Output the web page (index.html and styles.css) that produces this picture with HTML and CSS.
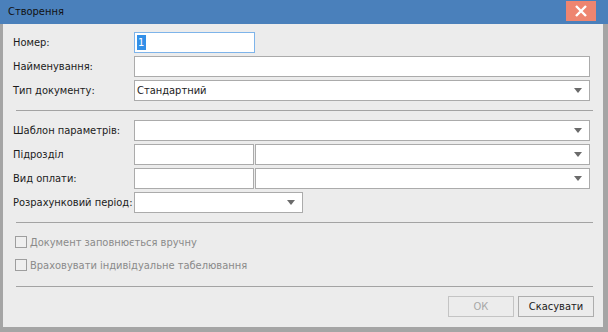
FILE: index.html
```html
<!DOCTYPE html>
<html lang="uk">
<head>
    <meta charset="UTF-8">
    <title>Створення</title>
    <link rel="stylesheet" href="styles.css">
</head>
<body>
    <div class="window">
        <div class="titlebar">
            <span class="title">Створення</span>
            <button class="close-btn">
                <svg width="12" height="12" viewBox="0 0 12 12"><path d="M1 1 L11 11 M11 1 L1 11" stroke="#fff" stroke-width="2.4"/></svg>
            </button>
        </div>
        <div class="content">
            <div class="section top">
                <div class="row">
                    <label>Номер:</label>
                    <div class="field short focused"><span class="sel">1</span></div>
                </div>
                <div class="row">
                    <label>Найменування:</label>
                    <div class="field"></div>
                </div>
                <div class="row">
                    <label>Тип документу:</label>
                    <div class="field combo"><span class="value">Стандартний</span><span class="arrow"></span></div>
                </div>
            </div>
            <div class="sep"></div>
            <div class="section">
                <div class="row">
                    <label>Шаблон параметрів:</label>
                    <div class="field combo"><span class="arrow"></span></div>
                </div>
                <div class="row">
                    <label>Підрозділ</label>
                    <div class="split">
                        <div class="field"></div>
                        <div class="field combo"><span class="arrow"></span></div>
                    </div>
                </div>
                <div class="row">
                    <label>Вид оплати:</label>
                    <div class="split">
                        <div class="field"></div>
                        <div class="field combo"><span class="arrow"></span></div>
                    </div>
                </div>
                <div class="row">
                    <label>Розрахунковий період:</label>
                    <div class="field combo period"><span class="arrow"></span></div>
                </div>
            </div>
            <div class="sep"></div>
            <div class="checks">
                <div class="check"><span class="box"></span>Документ заповнюється вручну</div>
                <div class="check"><span class="box"></span>Враховувати індивідуальне табелювання</div>
            </div>
            <div class="sep"></div>
            <div class="buttons">
                <button class="btn disabled">ОК</button>
                <button class="btn cancel">Скасувати</button>
            </div>
        </div>
    </div>
</body>
</html>
```

FILE: styles.css
```css
body {
    margin: 0;
    padding: 0;
    font-family: 'DejaVu Sans Condensed', 'DejaVu Sans', sans-serif;
    font-size: 11px;
    color: #1b1b1b;
    background: #ececec;
}

.window {
    width: 608px;
    height: 332px;
    box-sizing: border-box;
    background: #ececec;
    border-left: 3px solid #a5a5a5;
    border-right: 5px solid #a5a5a5;
    border-bottom: 5px solid #a5a5a5;
    display: flex;
    flex-direction: column;
}

.titlebar {
    height: 24px;
    flex: none;
    background: #4a80bb;
    margin: 0 -5px 0 -3px;
    padding: 0 0 0 8px;
    display: flex;
    align-items: flex-start;
}

.title {
    line-height: 24px;
    color: #111;
    flex: 1;
}

.close-btn {
    width: 30px;
    height: 20px;
    margin: 1px 12px 0 0;
    padding: 0;
    border: none;
    background: #ee8570;
    display: flex;
    align-items: center;
    justify-content: center;
}

.content {
    padding: 8px 13px 0 10px;
}

.section {
    display: flex;
    flex-direction: column;
    gap: 3px;
}

.row {
    display: grid;
    grid-template-columns: 121px 1fr;
    align-items: center;
    height: 21px;
    white-space: nowrap;
}

.field {
    height: 21px;
    box-sizing: border-box;
    border: 1px solid #ababab;
    background: #fff;
    display: flex;
    align-items: center;
    padding: 0 2px;
}

.field.short {
    width: 121px;
}

.field.focused {
    border-color: #7eb4ea;
}

.sel {
    background: #3390e8;
    color: #fff;
    line-height: 15px;
    padding: 0 2px 0 1px;
}

.combo {
    justify-content: space-between;
    padding-right: 7px;
}

.combo .value {
    color: #1b1b1b;
}

.arrow {
    margin-left: auto;
    width: 0;
    height: 0;
    border-left: 4px solid transparent;
    border-right: 4px solid transparent;
    border-top: 5px solid #6b6b6b;
}

.split {
    display: grid;
    grid-template-columns: 120px 1fr;
    gap: 1px;
}

.period {
    width: 169px;
}

.sep {
    height: 1px;
    background: #a3a3a3;
    margin: 9px -3px 9px 3px;
}

.checks {
    display: flex;
    flex-direction: column;
    gap: 11px;
    padding: 4px 0 6px 2px;
    color: #8a8a8a;
    white-space: nowrap;
}

.check {
    display: flex;
    align-items: center;
    height: 12px;
}

.box {
    width: 10px;
    height: 10px;
    border: 1px solid #9e9e9e;
    background: #efefef;
    margin-right: 3px;
}

.buttons {
    display: flex;
    justify-content: flex-end;
    gap: 4px;
    margin-right: -4px;
}

.btn {
    height: 21px;
    box-sizing: border-box;
    font-family: 'DejaVu Sans Condensed', 'DejaVu Sans', sans-serif;
    font-size: 11px;
    background: #ececec;
    border: 1px solid #adadad;
    color: #1b1b1b;
    padding: 0;
}

.btn.disabled {
    width: 66px;
    color: #a8a8a8;
    border-color: #c4c4c4;
}

.btn.cancel {
    width: 76px;
}
```
